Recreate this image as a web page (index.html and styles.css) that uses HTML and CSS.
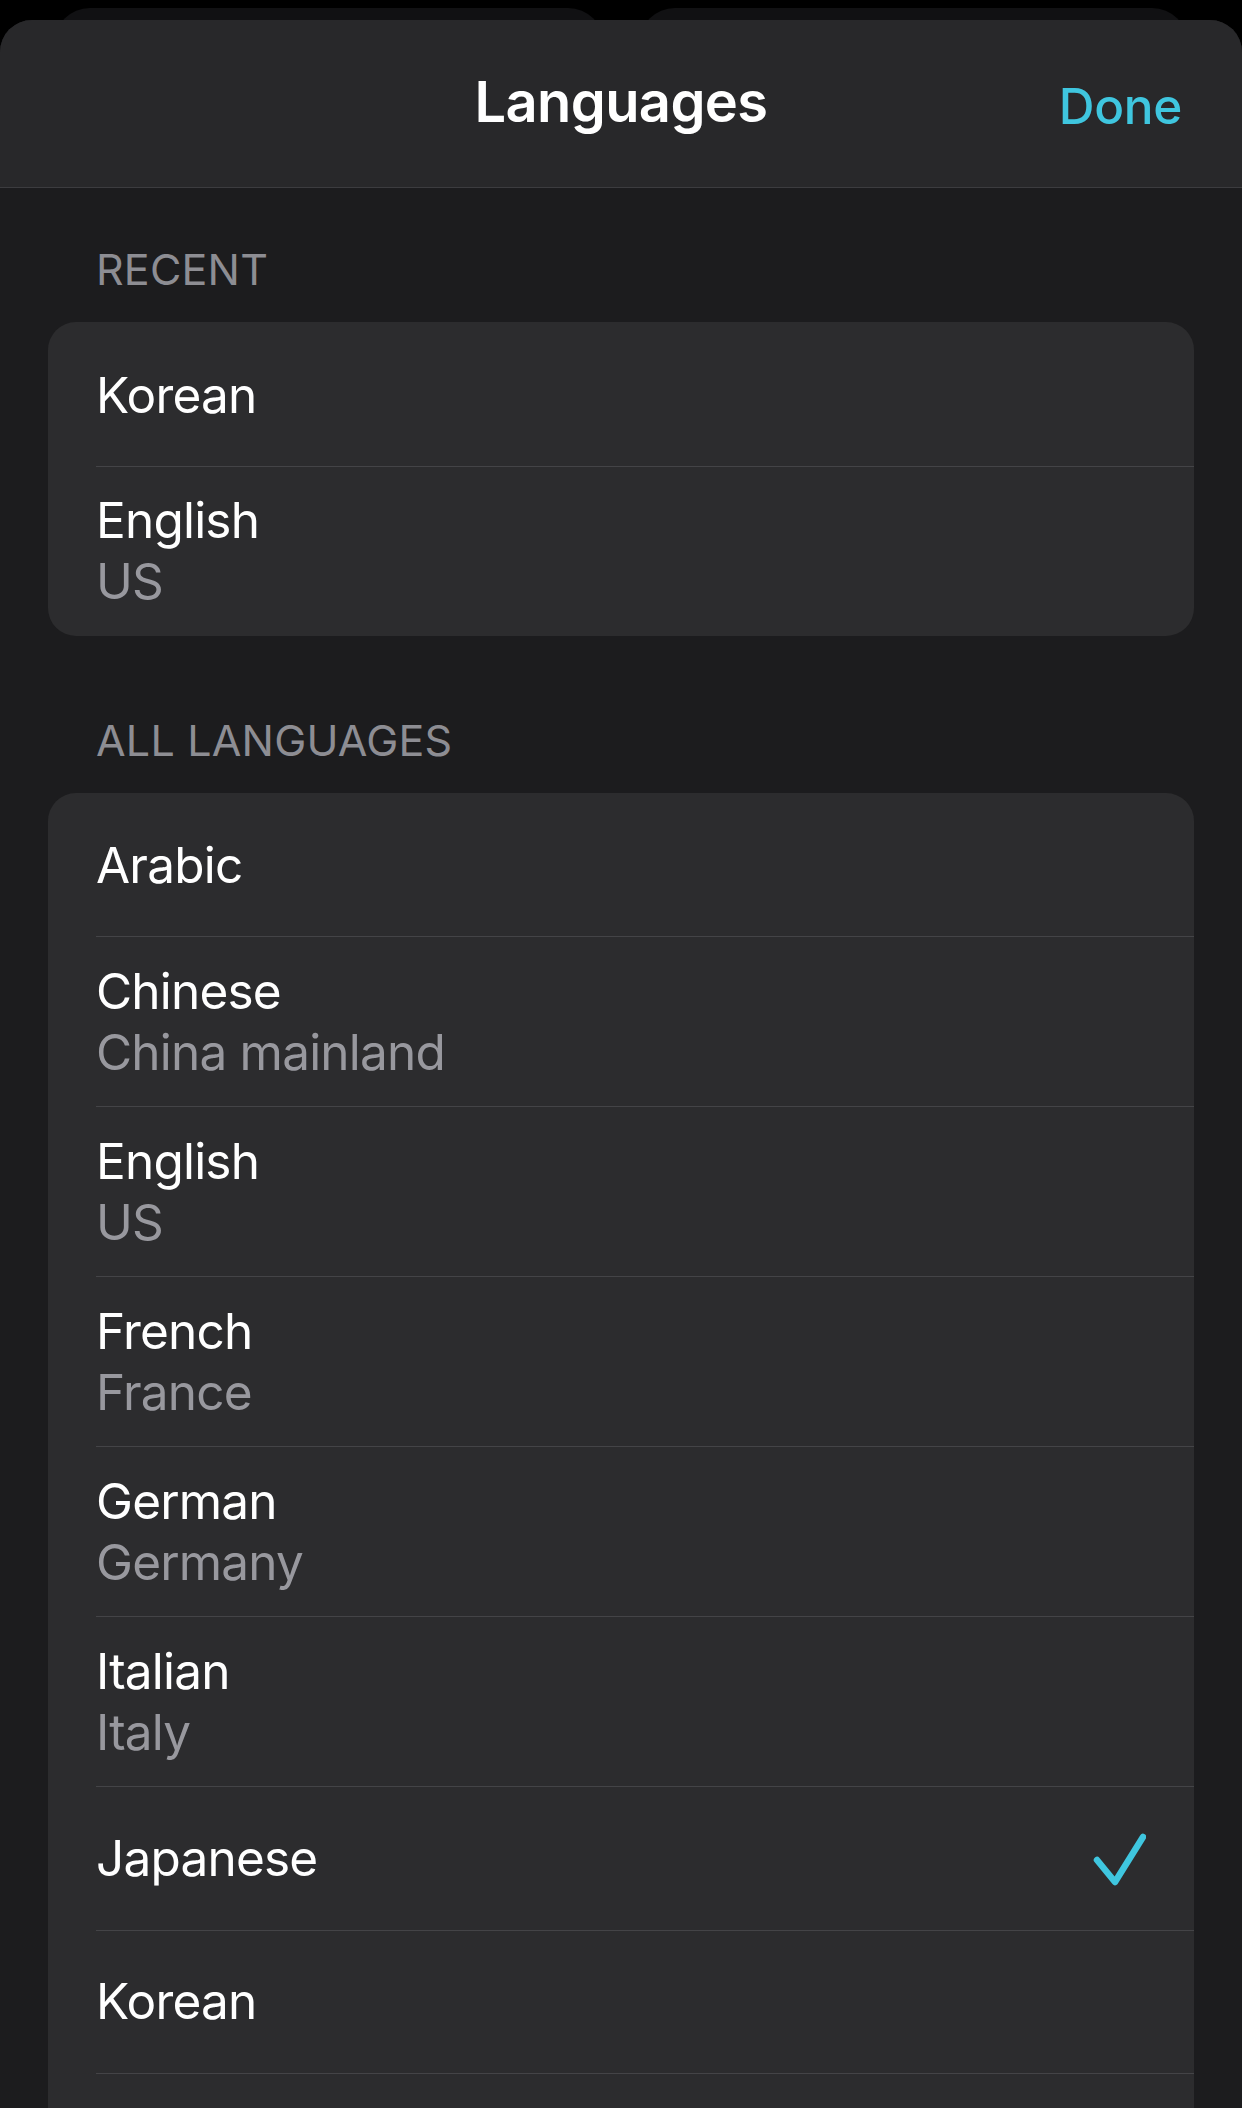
FILE: index.html
```html
<!DOCTYPE html>
<html lang="en">
<head>
<meta charset="utf-8">
<title>Languages</title>
<link rel="stylesheet" href="styles.css">
</head>
<body>
<div class="backdrop">
  <div class="back-card"></div>
  <div class="back-card"></div>
</div>
<div class="sheet">
  <header class="nav">
    <span class="nav-side"></span>
    <h1 class="nav-title">Languages</h1>
    <span class="nav-side nav-right"><button class="done">Done</button></span>
  </header>
  <main class="content">
    <h2 class="section-title">RECENT</h2>
    <ul class="group">
      <li class="row row-first"><span class="label"><span class="name">Korean</span></span></li>
      <li class="row row-double"><span class="label"><span class="name">English</span><span class="sub">US</span></span></li>
    </ul>
    <h2 class="section-title">ALL LANGUAGES</h2>
    <ul class="group">
      <li class="row row-first"><span class="label"><span class="name">Arabic</span></span></li>
      <li class="row row-double"><span class="label"><span class="name">Chinese</span><span class="sub">China mainland</span></span></li>
      <li class="row row-double"><span class="label"><span class="name">English</span><span class="sub">US</span></span></li>
      <li class="row row-double"><span class="label"><span class="name">French</span><span class="sub">France</span></span></li>
      <li class="row row-double"><span class="label"><span class="name">German</span><span class="sub">Germany</span></span></li>
      <li class="row row-double"><span class="label"><span class="name">Italian</span><span class="sub">Italy</span></span></li>
      <li class="row"><span class="label"><span class="name">Japanese</span></span>
        <svg class="check" width="56" height="56" viewBox="0 0 56 56" aria-hidden="true"><polyline points="7,30 25,52 53,7" fill="none" stroke="#3fc6df" stroke-width="6.5" stroke-linecap="round" stroke-linejoin="round"/></svg>
      </li>
      <li class="row"><span class="label"><span class="name">Korean</span></span></li>
      <li class="row row-double"></li>
    </ul>
  </main>
</div>
</body>
</html>
```
FILE: styles.css
```css
* { box-sizing: border-box; }
html, body {
  margin: 0;
  padding: 0;
  background: #000;
  height: 2108px;
  overflow: hidden;
}
body {
  font-family: Inter, "Noto Sans", "Liberation Sans", sans-serif;
  color: #fff;
  -webkit-font-smoothing: antialiased;
}
.backdrop {
  display: flex;
  gap: 35px;
  padding: 8px 54px 0;
}
.back-card {
  flex: 1;
  height: 60px;
  background: #111113;
  border-radius: 36px 36px 0 0;
}
.sheet {
  position: relative;
  margin-top: -48px;
  height: 2088px;
  background: #1c1c1e;
  border-radius: 32px 32px 0 0;
  overflow: hidden;
}
.nav {
  height: 168px;
  background: #28282a;
  border-bottom: 1px solid #3c3c3f;
  display: grid;
  grid-template-columns: 1fr auto 1fr;
  align-items: center;
}
.nav-title {
  margin: 0;
  font-size: 56px;
  font-weight: 600;
  letter-spacing: -0.6px;
  line-height: 68px;
  padding-bottom: 4px;
}
.nav-right {
  justify-self: end;
  padding-right: 60px;
}
.done {
  background: none;
  border: 0;
  padding: 0;
  font-family: inherit;
  font-size: 49.5px;
  font-weight: 500;
  letter-spacing: -0.3px;
  line-height: 60px;
  color: #3fc6df;
  margin-top: 4px;
}
.content {
  padding: 0 48px;
}
.section-title {
  margin: 0;
  font-size: 43px;
  font-weight: 400;
  line-height: 52px;
  color: #8d8d93;
  padding: 55px 0 0 48px;
  margin-bottom: 27px;
  letter-spacing: 0.2px;
}
.group + .section-title {
  padding-top: 78px;
}
.group {
  list-style: none;
  margin: 0;
  padding: 0;
  background: #2c2c2e;
  border-radius: 28px;
}
.row {
  margin-left: 48px;
  padding-right: 48px;
  height: 143.5px;
  display: flex;
  align-items: center;
  justify-content: space-between;
  border-top: 1px solid #444447;
}
.row-first {
  border-top: 0;
  padding-top: 3px;
}
.row-double {
  height: 170px;
}
.label {
  display: flex;
  flex-direction: column;
  font-size: 49.5px;
  line-height: 61px;
  letter-spacing: -0.8px;
}
.sub {
  color: #98989e;
}
.check {
  display: block;
}
```
